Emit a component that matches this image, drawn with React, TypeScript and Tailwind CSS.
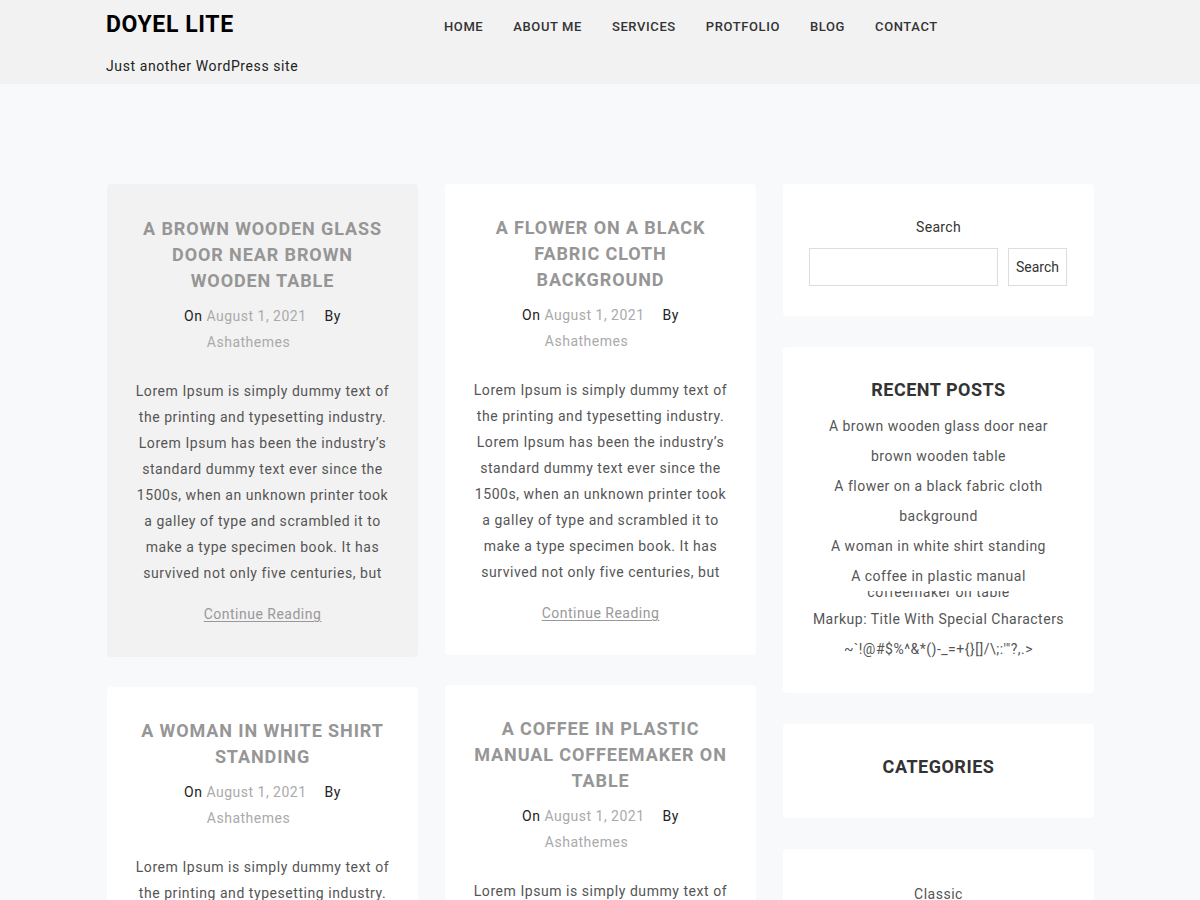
import React from "react";

const navItems = ["Home", "About Me", "Services", "Protfolio", "Blog", "Contact"];

const excerpt =
  "Lorem Ipsum is simply dummy text of the printing and typesetting industry. Lorem Ipsum has been the industry’s standard dummy text ever since the 1500s, when an unknown printer took a galley of type and scrambled it to make a type specimen book. It has survived not only five centuries, but also the leap into electronic typesetting, remaining essentially unchanged.";

type Post = { title: string; active?: boolean };

function PostCard({ title, active }: Post) {
  return (
    <article
      className={`rounded-[4px] px-[28px] text-center ${
        active ? "bg-[#f2f2f2] pt-[32px] pb-[30px]" : "bg-white pt-[31px] pb-[29px]"
      }`}
    >
      <h2 className="text-[18px] font-bold uppercase leading-[26px] tracking-[0.9px] text-[#969696]">
        {title}
      </h2>
      {/* meta */}
      <div className="mt-[9px] text-[14px] leading-[26px] tracking-[0.5px] text-[#222]">
        <div>
          On <span className="text-[#aaa]">August 1, 2021</span>
          <span className="ml-[18px]">By</span>
        </div>
        <div className="pr-[28px] text-[#aaa]">Ashathemes</div>
      </div>
      <p className="mt-[23px] h-[214px] overflow-hidden text-[14px] leading-[26px] tracking-[0.55px] text-[#555]">
        {excerpt}
      </p>
      <a className="mt-[9px] inline-block text-[14px] leading-[26px] tracking-[0.5px] text-[#999] underline underline-offset-2">
        Continue Reading
      </a>
    </article>
  );
}

function Widget({ children, className = "" }: { children: React.ReactNode; className?: string }) {
  return <div className={`rounded-[4px] bg-white px-[26px] text-center ${className}`}>{children}</div>;
}

export default function App() {
  return (
    <div className="min-h-screen bg-[#f8f9fa] font-['Roboto',sans-serif]">
      {/* Header */}
      <header className="h-[84px] bg-[#f2f2f2]">
        <div className="mx-auto flex w-[988px] items-start">
          <div className="w-[338px]">
            <h1 className="pt-[10px] text-[23px] font-bold leading-[30px] tracking-[0.6px] text-black">DOYEL LITE</h1>
            <p className="mt-[16px] text-[14px] leading-[20px] tracking-[0.6px] text-[#222]">
              Just another WordPress site
            </p>
          </div>
          <nav className="flex gap-[30px] pt-[18px]">
            {navItems.map((n) => (
              <a key={n} className="text-[13px] font-medium uppercase leading-[18px] tracking-[0.6px] text-[#333]">
                {n}
              </a>
            ))}
          </nav>
        </div>
      </header>

      {/* Content */}
      <main className="mx-auto mt-[100px] grid w-[988px] grid-cols-[311px_311px_311px] gap-x-[27px] pl-[1px]">
        <div className="flex flex-col gap-[30px]">
          <PostCard title="A brown wooden glass door near brown wooden table" active />
          <PostCard title="A woman in white shirt standing" />
        </div>
        <div className="flex flex-col gap-[30px]">
          <PostCard title="A flower on a black fabric cloth background" />
          <PostCard title="A coffee in plastic manual coffeemaker on table" />
        </div>
        <aside className="flex flex-col gap-[31px]">
          <Widget className="py-[30px]">
            <div className="text-[14px] leading-[26px] tracking-[0.3px] text-[#333]">Search</div>
            <div className="mt-[8px] flex gap-[10px]">
              <input className="h-[38px] w-[189px] border border-[#ddd] bg-white outline-none" />
              <button className="h-[38px] w-[59px] border border-[#ddd] bg-white pt-[1px] text-[14px] text-[#333]">
                Search
              </button>
            </div>
          </Widget>
          <Widget className="pt-[31px] pb-[29px]">
            <h3 className="mb-[9px] text-[18px] font-bold uppercase leading-[24px] tracking-[0.5px] text-[#333]">
              Recent Posts
            </h3>
            <ul className="text-[14px] leading-[30px] tracking-[0.5px] text-[#555]">
              <li>A brown wooden glass door near brown wooden table</li>
              <li>A flower on a black fabric cloth background</li>
              <li>A woman in white shirt standing</li>
              <li>
                <div>A coffee in plastic manual</div>
                <div className="h-[13px] overflow-hidden">
                  <div className="-mt-[14px]">coffeemaker on table</div>
                </div>
              </li>
              <li>Markup: Title With Special Characters ~`!@#$%^&amp;*()-_=+{"{}"}[]/\;:'"?,.&gt;</li>
            </ul>
          </Widget>
          <Widget className="pt-[31px] pb-[30px]">
            <h3 className="mb-[9px] text-[18px] font-bold uppercase leading-[24px] tracking-[0.5px] text-[#333]">
              Categories
            </h3>
          </Widget>
          <Widget className="py-[30px]">
            <div className="text-[14px] leading-[30px] tracking-[0.5px] text-[#555]">Classic</div>
          </Widget>
        </aside>
      </main>
    </div>
  );
}
